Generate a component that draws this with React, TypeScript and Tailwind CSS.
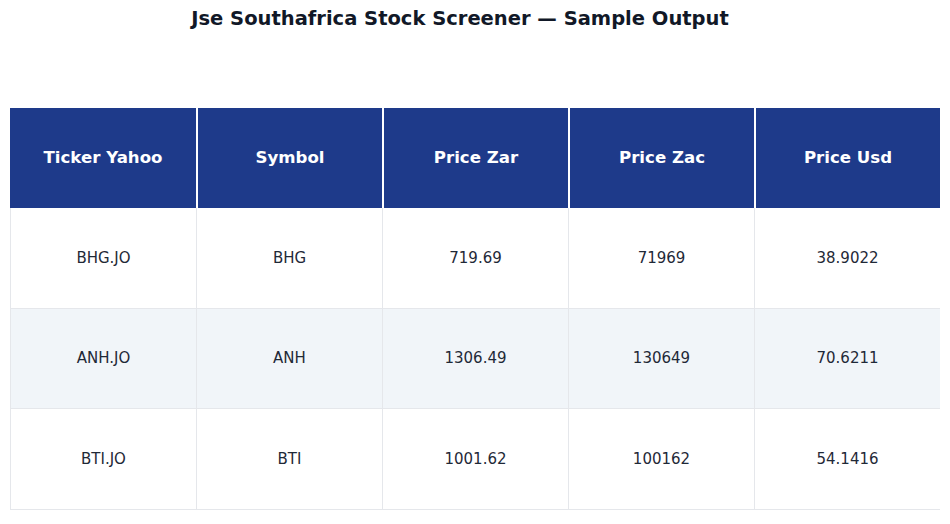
import React from "react";

const columns = ["Ticker Yahoo", "Symbol", "Price Zar", "Price Zac", "Price Usd"];

const rows = [
  ["BHG.JO", "BHG", "719.69", "71969", "38.9022"],
  ["ANH.JO", "ANH", "1306.49", "130649", "70.6211"],
  ["BTI.JO", "BTI", "1001.62", "100162", "54.1416"],
];

export default function App() {
  return (
    <div className="w-[950px] h-[524px] bg-white overflow-hidden font-['DejaVu_Sans',sans-serif]">
      {/* Title */}
      <h1 className="pt-[6px] pr-[30px] h-[108px] text-center text-[19.5px] leading-[26px] font-bold text-[#111827]">
        Jse Southafrica Stock Screener — Sample Output
      </h1>

      {/* Table */}
      <div className="ml-[10px] w-[930px]">
        <div className="flex h-[100px] bg-[#1e3a8a]">
          {columns.map((col, i) => (
            <div
              key={col}
              className={`w-[186px] flex items-center justify-center text-[16.6px] font-bold text-white ${
                i > 0 ? "border-l-2 border-white" : ""
              }`}
            >
              {col}
            </div>
          ))}
        </div>

        {rows.map((row, r) => (
          <div
            key={row[0]}
            className={`flex h-[100.67px] border-b border-[#e5e7eb] ${
              r % 2 === 1 ? "bg-[#f1f5f9]" : "bg-white"
            }`}
          >
            {row.map((cell, i) => (
              <div
                key={i}
                className="w-[186px] flex items-center justify-center border-l border-[#e5e7eb] text-[15px] text-[#1f2937]"
              >
                {cell}
              </div>
            ))}
          </div>
        ))}
      </div>
    </div>
  );
}
